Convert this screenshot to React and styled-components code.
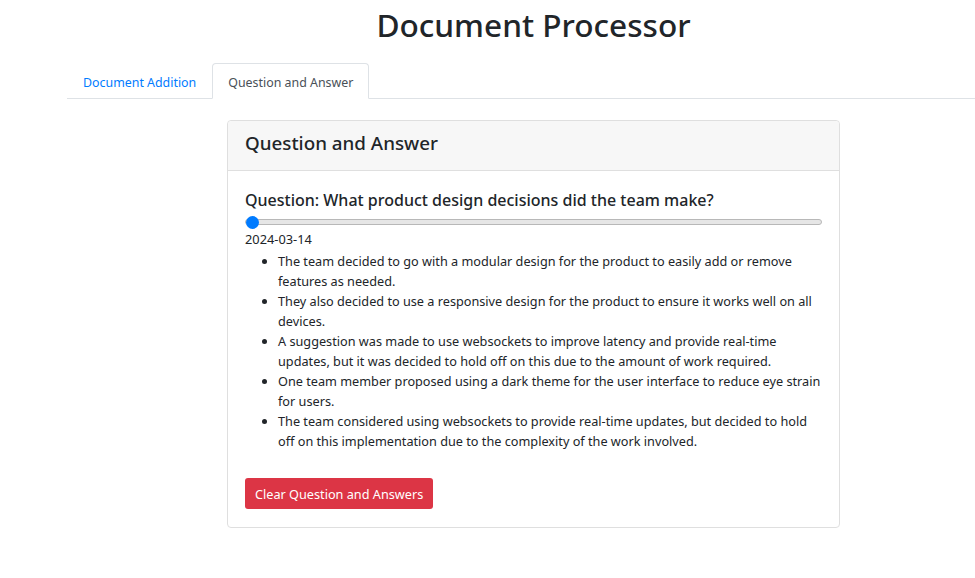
import styled, { createGlobalStyle } from "styled-components";

const GlobalStyle = createGlobalStyle`
  html, body {
    margin: 0;
    padding: 0;
    background: #fff;
  }
  body {
    font-family: "Noto Sans", "Open Sans", sans-serif;
    color: #212529;
  }
`;

const Page = styled.div`
  padding-left: 92px;
`;

const Title = styled.h1`
  margin: 0;
  padding-top: 5px;
  height: 58px;
  text-align: center;
  font-size: 31.6px;
  font-weight: 500;
  line-height: 40px;
  color: #212529;
`;

const Tabs = styled.ul`
  display: flex;
  list-style: none;
  margin: 0 0 0 -25px;
  padding: 0;
  border-bottom: 1px solid #dee2e6;
`;

const Tab = styled.li`
  margin-bottom: -1px;
`;

const TabLink = styled.a`
  display: block;
  padding: 0 15px;
  height: 34px;
  line-height: 38px;
  font-size: 12.4px;
  text-decoration: none;
  border: 1px solid ${(p) => (p.$active ? "#dee2e6" : "transparent")};
  border-bottom-color: ${(p) => (p.$active ? "#fff" : "transparent")};
  border-radius: 4px 4px 0 0;
  background: ${(p) => (p.$active ? "#fff" : "transparent")};
  color: ${(p) => (p.$active ? "#495057" : "#007bff")};
  cursor: pointer;
`;

const Card = styled.div`
  width: 611px;
  margin: 21px auto 0;
  border: 1px solid #dfdfdf;
  border-radius: 4px;
  background: #fff;
`;

const CardHeader = styled.div`
  height: 50px;
  padding: 8px 17px 0;
  box-sizing: border-box;
  background: #f7f7f7;
  border-bottom: 1px solid #dfdfdf;
  border-radius: 4px 4px 0 0;
`;

const CardTitle = styled.h4`
  margin: 0;
  font-size: 18.8px;
  font-weight: 500;
  line-height: 28px;
`;

const CardBody = styled.div`
  padding: 17px 17px 18px;
`;

const Question = styled.h5`
  margin: 0;
  font-size: 16px;
  font-weight: 500;
  line-height: 24px;
`;

const Slider = styled.input`
  -webkit-appearance: none;
  appearance: none;
  display: block;
  width: 577px;
  height: 14px;
  margin: 3px 0 0 0;
  background: transparent;

  &::-webkit-slider-runnable-track {
    height: 6px;
    border-radius: 4px;
    background: #e6e6e6;
    border: 1px solid #b8b8b8;
  }
  &::-webkit-slider-thumb {
    -webkit-appearance: none;
    width: 13px;
    height: 13px;
    margin-top: -4.5px;
    border-radius: 50%;
    background: #007bff;
    border: none;
  }
`;

const Date = styled.div`
  margin-top: 1px;
  font-size: 12.8px;
  line-height: 18px;
`;

const Answers = styled.ul`
  margin: 3px 0 27px;
  padding-left: 33px;
  font-size: 12.7px;
  line-height: 20px;
`;

const Answer = styled.li``;

const DangerButton = styled.button`
  display: block;
  height: 31px;
  padding: 0 10px;
  border: none;
  border-radius: 3px;
  background: #dc3545;
  color: #fff;
  font-family: inherit;
  font-size: 12.7px;
  cursor: pointer;
`;

const answers = [
  "The team decided to go with a modular design for the product to easily add or remove features as needed.",
  "They also decided to use a responsive design for the product to ensure it works well on all devices.",
  "A suggestion was made to use websockets to improve latency and provide real-time updates, but it was decided to hold off on this due to the amount of work required.",
  "One team member proposed using a dark theme for the user interface to reduce eye strain for users.",
  "The team considered using websockets to provide real-time updates, but decided to hold off on this implementation due to the complexity of the work involved.",
];

export default function App() {
  return (
    <Page>
      <GlobalStyle />
      <Title>Document Processor</Title>
      <Tabs>
        <Tab>
          <TabLink>Document Addition</TabLink>
        </Tab>
        <Tab>
          <TabLink $active>Question and Answer</TabLink>
        </Tab>
      </Tabs>
      <Card>
        <CardHeader>
          <CardTitle>Question and Answer</CardTitle>
        </CardHeader>
        <CardBody>
          <Question>Question: What product design decisions did the team make?</Question>
          <Slider type="range" min="0" max="10" defaultValue="0" />
          <Date>2024-03-14</Date>
          <Answers>
            {answers.map((a) => (
              <Answer key={a}>{a}</Answer>
            ))}
          </Answers>
          <DangerButton>Clear Question and Answers</DangerButton>
        </CardBody>
      </Card>
    </Page>
  );
}
